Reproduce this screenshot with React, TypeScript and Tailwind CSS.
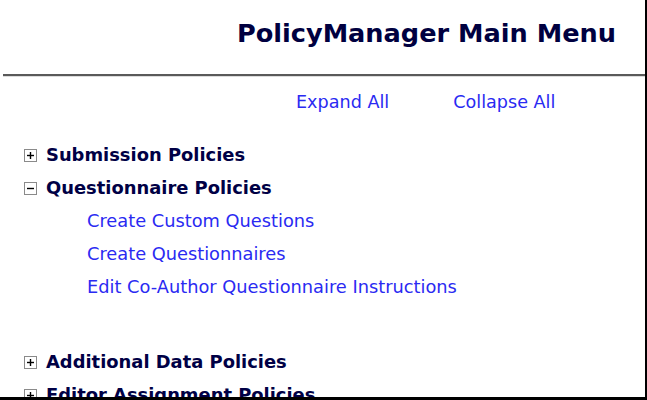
import React from "react";

const font = { fontFamily: '"DejaVu Sans", Verdana, sans-serif' };

function Box({ open }: { open: boolean }) {
  return (
    <svg width="13" height="13" viewBox="0 0 13 13" className="shrink-0">
      <rect x="0.5" y="0.5" width="12" height="12" fill="#fff" stroke="#8a8a8a" />
      <line x1="3" y1="6.5" x2="10" y2="6.5" stroke="#000" strokeWidth="1.4" />
      {!open && <line x1="6.5" y1="3" x2="6.5" y2="10" stroke="#000" strokeWidth="1.4" />}
    </svg>
  );
}

function Header({ label, open }: { label: string; open: boolean }) {
  return (
    <div className="flex h-[33px] items-center gap-[9px] pl-[24px]">
      <Box open={open} />
      <span className="text-[17.9px] font-bold text-[#000045]">{label}</span>
    </div>
  );
}

function Link({ label }: { label: string }) {
  return (
    <div className="flex h-[33px] items-center pl-[87px] pb-[1px]">
      <span className="text-[17.8px] text-[#2a2af2]">{label}</span>
    </div>
  );
}

export default function App() {
  return (
    <div
      className="h-[400px] w-[647px] overflow-hidden border-b-[3px] border-r-2 border-black bg-white"
      style={font}
    >
      <div className="flex h-[74px] items-center justify-end pr-[29px] pb-[7px]">
        <h1 className="text-[25.6px] font-bold text-[#000040]">PolicyManager Main Menu</h1>
      </div>
      <div className="ml-[3px] h-[2px] bg-[#5a5a5a]" />
      <div className="ml-[3px] h-[1px] bg-[#dcdcdc]" />
      <div className="flex h-[52px] items-center pl-[296px] pb-[2px]">
        <span className="text-[17.6px] text-[#2a2af2]">Expand All</span>
        <span className="ml-[64px] text-[17.6px] text-[#2a2af2]">Collapse All</span>
      </div>
      <div className="pt-[10px]">
        <Header label="Submission Policies" open={false} />
        <Header label="Questionnaire Policies" open={true} />
        <Link label="Create Custom Questions" />
        <Link label="Create Questionnaires" />
        <Link label="Edit Co-Author Questionnaire Instructions" />
        <div className="h-[42px]" />
        <Header label="Additional Data Policies" open={false} />
        <Header label="Editor Assignment Policies" open={false} />
      </div>
    </div>
  );
}
